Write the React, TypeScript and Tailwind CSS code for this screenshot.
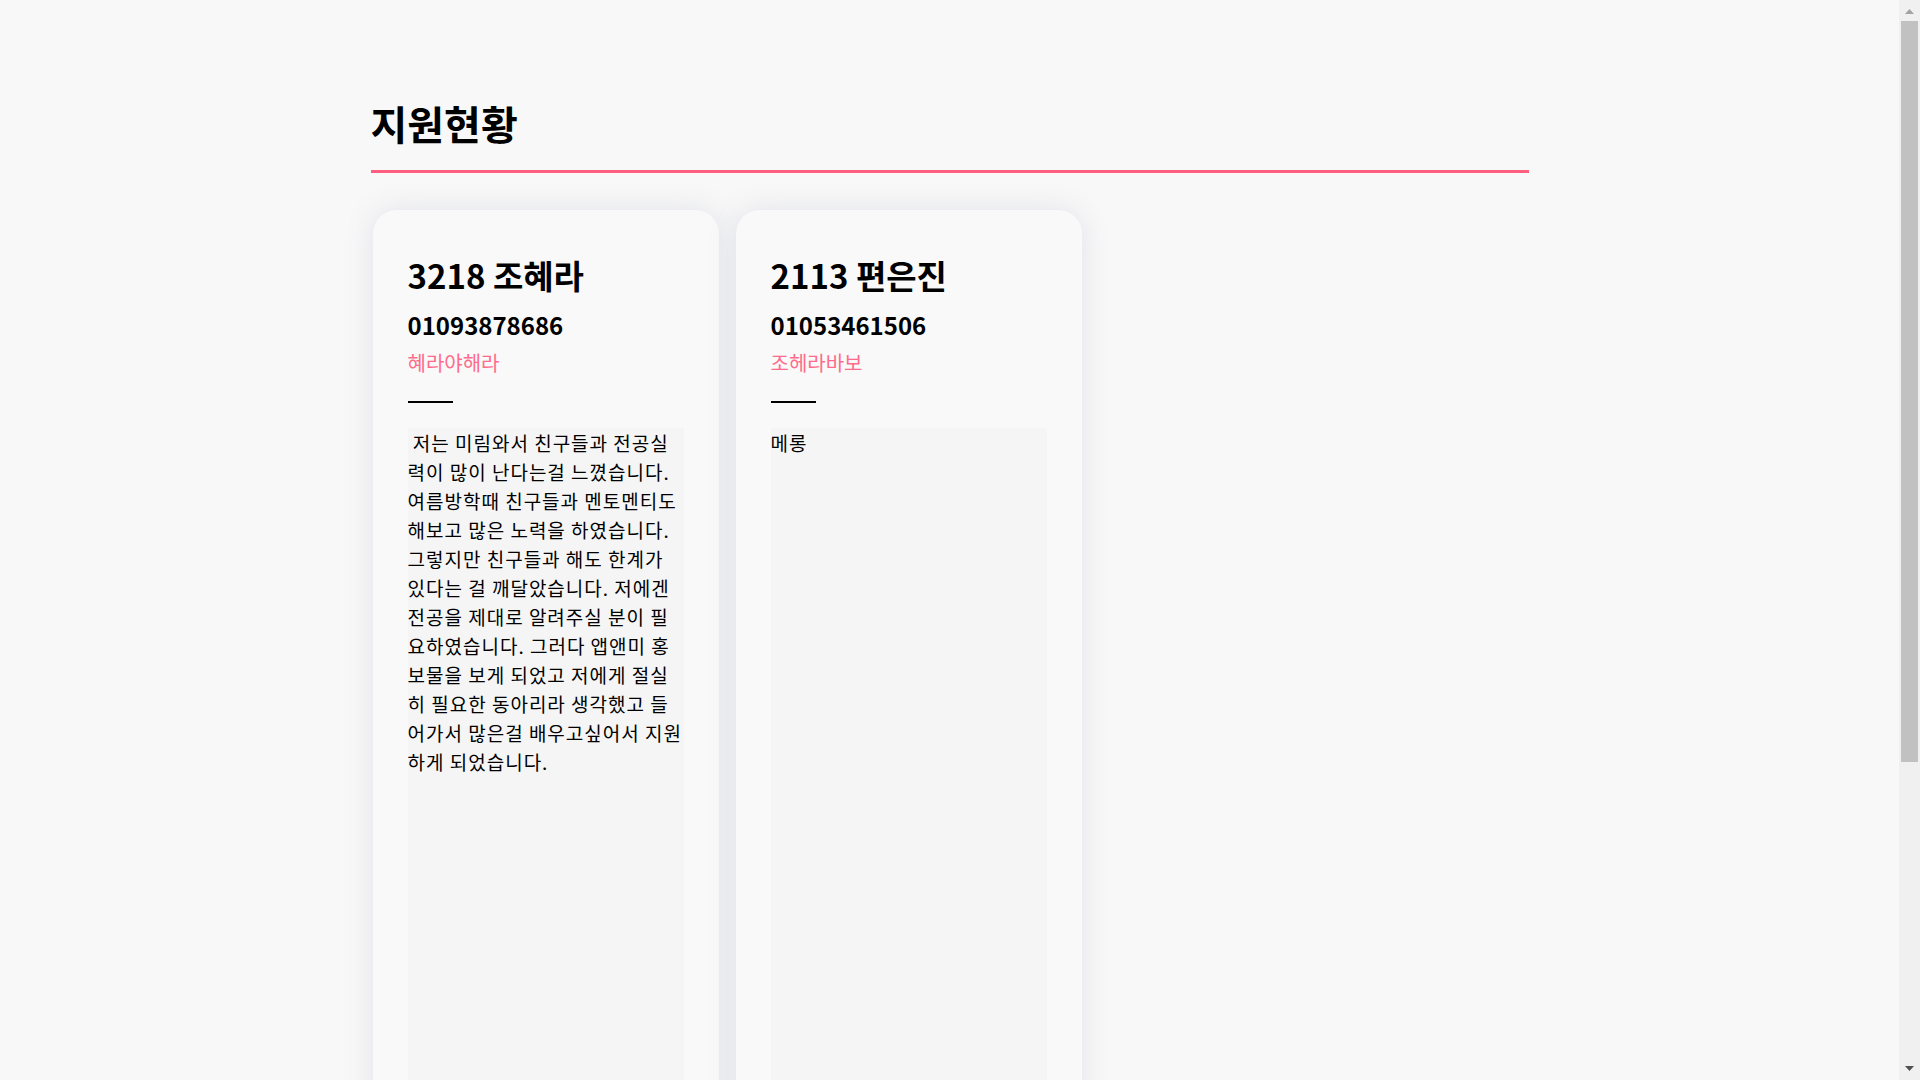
const applicants = [
  {
    id: '3218',
    name: '조혜라',
    phone: '01093878686',
    nick: '혜라야해라',
    // 원래 textarea 줄바꿈 그대로
    intro:
      ' 저는 미림와서 친구들과 전공실\n력이 많이 난다는걸 느꼈습니다.\n여름방학때 친구들과 멘토멘티도\n해보고 많은 노력을 하였습니다.\n그렇지만 친구들과 해도 한계가\n있다는 걸 깨달았습니다. 저에겐\n전공을 제대로 알려주실 분이 필\n요하였습니다. 그러다 앱앤미 홍\n보물을 보게 되었고 저에게 절실\n히 필요한 동아리라 생각했고 들\n어가서 많은걸 배우고싶어서 지원\n하게 되었습니다.',
  },
  {
    id: '2113',
    name: '편은진',
    phone: '01053461506',
    nick: '조헤라바보',
    intro: '메롱',
  },
];

function ApplyCard({ a }: { a: (typeof applicants)[number] }) {
  return (
    <div className="w-[346px] rounded-[24px] bg-[#f9f9f9] px-[35px] pb-[35px] pt-[42px] shadow-[0_0_30px_rgba(90,100,140,0.14)]">
      <h2 className="text-[33px] font-bold leading-[46px] text-black">
        {a.id} {a.name}
      </h2>
      <p className="mt-[10px] text-[24px] font-bold leading-[34px] text-black">{a.phone}</p>
      <p className="mt-[7px] text-[20px] leading-[28px] text-[#ff6b8b]">{a.nick}</p>
      <div className="mt-[24px] h-[2px] w-[45px] bg-black" />
      <div className="mt-[25px] h-[1000px] w-[276px] overflow-hidden whitespace-pre bg-[#f5f5f5] text-[19px] leading-[29px] tracking-[1px] text-black">
        {a.intro}
      </div>
    </div>
  );
}

function Scrollbar() {
  return (
    <div className="flex w-[21px] shrink-0 flex-col bg-[#f0f0f0]">
      <div className="flex h-[21px] items-start justify-center pt-[9px]">
        <svg width="9" height="5" viewBox="0 0 9 5">
          <path d="M4.5 0L9 5H0z" fill="#a3a3a3" />
        </svg>
      </div>
      <div className="px-[2px]">
        <div className="h-[741px] bg-[#c1c1c1]" />
      </div>
      <div className="flex flex-1 items-end justify-center pb-[9px]">
        <svg width="9" height="5" viewBox="0 0 9 5">
          <path d="M0 0H9L4.5 5z" fill="#505050" />
        </svg>
      </div>
    </div>
  );
}

export default function App() {
  return (
    <div className="flex h-screen overflow-hidden bg-[#f8f8f8] font-['Noto_Sans_CJK_KR','Noto_Sans',sans-serif]">
      <main className="flex-1 overflow-hidden">
        <div className="mx-auto w-[1158px] pb-[60px] pt-[95px]">
          <h1 className="text-[40px] font-bold leading-[56px] text-black">지원현황</h1>
          <div className="mt-[19px] h-[3px] bg-[#ff5e7e]" />
          <div className="mt-[37px] flex gap-[17px] pl-[2px]">
            {applicants.map((a) => (
              <ApplyCard key={a.id} a={a} />
            ))}
          </div>
        </div>
      </main>
      <Scrollbar />
    </div>
  );
}
